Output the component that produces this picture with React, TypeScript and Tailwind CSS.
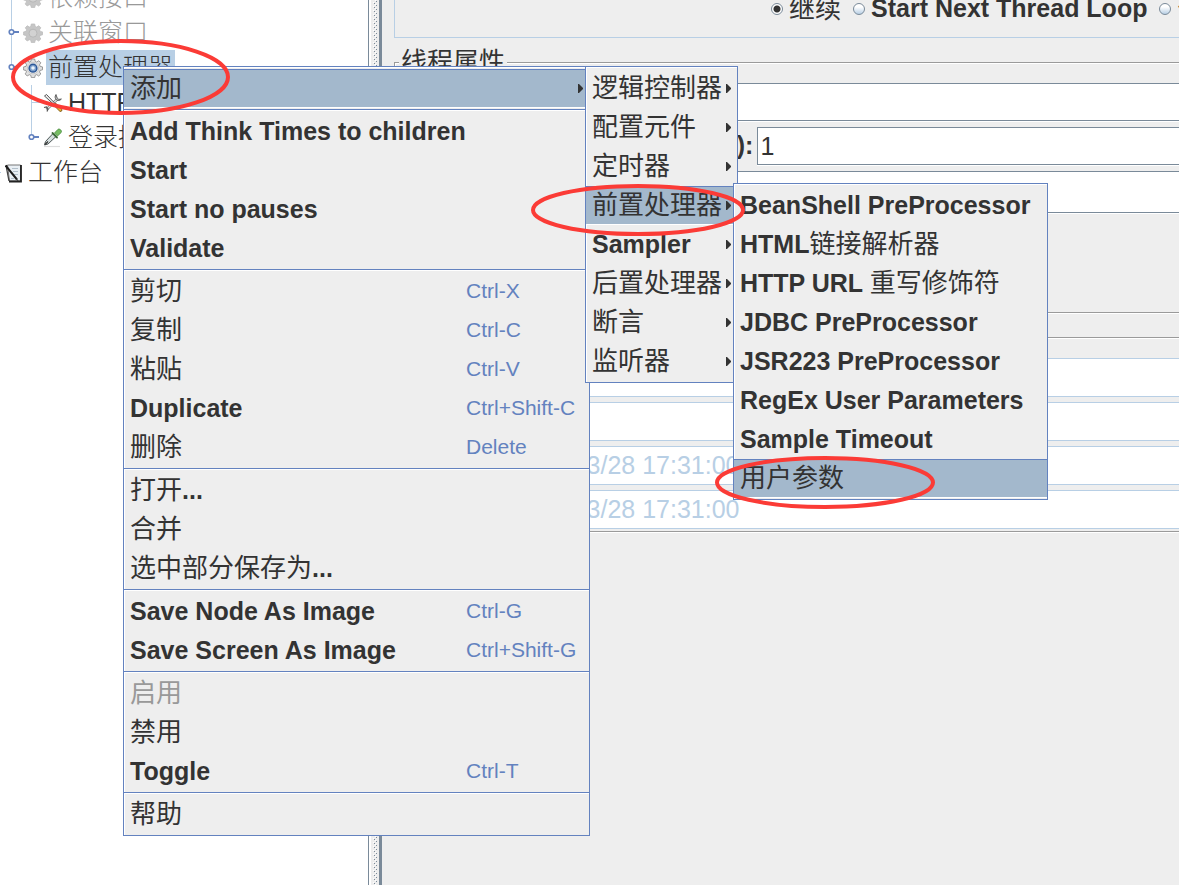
import { Fragment, type ReactNode } from 'react';

interface MenuEntry {
  label: string;
  accel?: string;
  submenu?: boolean;
  active?: boolean;
  disabled?: boolean;
}

const CONTEXT_MENU: MenuEntry[][] = [
  [{ label: '添加', submenu: true, active: true }],
  [
    { label: 'Add Think Times to children' },
    { label: 'Start' },
    { label: 'Start no pauses' },
    { label: 'Validate' },
  ],
  [
    { label: '剪切', accel: 'Ctrl-X' },
    { label: '复制', accel: 'Ctrl-C' },
    { label: '粘贴', accel: 'Ctrl-V' },
    { label: 'Duplicate', accel: 'Ctrl+Shift-C' },
    { label: '删除', accel: 'Delete' },
  ],
  [{ label: '打开...' }, { label: '合并' }, { label: '选中部分保存为...' }],
  [
    { label: 'Save Node As Image', accel: 'Ctrl-G' },
    { label: 'Save Screen As Image', accel: 'Ctrl+Shift-G' },
  ],
  [{ label: '启用', disabled: true }, { label: '禁用' }, { label: 'Toggle', accel: 'Ctrl-T' }],
  [{ label: '帮助' }],
];

const ADD_MENU: MenuEntry[][] = [
  [
    { label: '逻辑控制器', submenu: true },
    { label: '配置元件', submenu: true },
    { label: '定时器', submenu: true },
    { label: '前置处理器', submenu: true, active: true },
    { label: 'Sampler', submenu: true },
    { label: '后置处理器', submenu: true },
    { label: '断言', submenu: true },
    { label: '监听器', submenu: true },
  ],
];

const PREPROCESSOR_MENU: MenuEntry[][] = [
  [
    { label: 'BeanShell PreProcessor' },
    { label: 'HTML链接解析器' },
    { label: 'HTTP URL 重写修饰符' },
    { label: 'JDBC PreProcessor' },
    { label: 'JSR223 PreProcessor' },
    { label: 'RegEx User Parameters' },
    { label: 'Sample Timeout' },
    { label: '用户参数', active: true },
  ],
];

const SCHEDULER = [
  { id: 'duration', label: '持续时间', value: '' },
  { id: 'delay', label: '启动延迟', value: '' },
  { id: 'start', label: '启动时间', value: '2018/3/28 17:31:00' },
  { id: 'end', label: '结束时间', value: '2018/3/28 17:31:00' },
];

// Latin runs are bold, Chinese runs are regular and one pixel larger
function Mixed({ text }: { text: string }) {
  return (
    <>
      {text.split(/([\u4e00-\u9fff]+)/).filter(Boolean).map((part, i) =>
        /[\u4e00-\u9fff]/.test(part) ? (
          <span key={i} className="text-[26px] font-normal">{part}</span>
        ) : (
          <span key={i} className="font-bold">{part}</span>
        ),
      )}
    </>
  );
}

function Menu({ groups, className, label }: { groups: MenuEntry[][]; className: string; label: string }) {
  return (
    <div
      role="menu"
      aria-label={label}
      className={`absolute border border-[#6382bf] bg-[#eeeeee] pt-0.5 pb-px shadow-[inset_1px_1px_0_#fff] ${className}`}
    >
      {groups.map((group, g) => (
        <Fragment key={g}>
          {g > 0 && <div role="separator" className="my-px h-0.5 border-t border-b border-t-[#6382bf] border-b-white" />}
          {group.map(item => (
            <button
              key={item.label}
              type="button"
              role="menuitem"
              disabled={item.disabled}
              className={`flex h-[39px] w-full items-center border-y px-1.5 text-left leading-[37px] whitespace-nowrap ${
                item.active ? 'border-t-[#6382bf] border-b-white bg-[#a3b8cc]' : 'border-transparent'
              } ${item.disabled ? 'text-[#999999]' : 'text-[#333333]'}`}
            >
              <span className="flex-1 whitespace-pre"><Mixed text={item.label} /></span>
              {item.accel && <span className="w-[117px] pb-0.5 text-[21px] leading-[35px] text-[#6382bf]">{item.accel}</span>}
              {item.submenu && (
                <svg width="5" height="9" viewBox="0 0 5 9" className="shrink-0" aria-hidden="true">
                  <path d="M0 0h1l4 4v1L1 9H0z" fill="#333" />
                </svg>
              )}
            </button>
          ))}
        </Fragment>
      ))}
    </div>
  );
}

function GearIcon({ muted }: { muted?: boolean }) {
  const fill = muted ? '#c6c6c6' : '#e0e0e0';
  const edge = muted ? '#bcbcbc' : '#858585';
  return (
    <svg width="20" height="20" viewBox="0 0 20 20" className="shrink-0" aria-hidden="true">
      <path
        d="M8.3 1h3.4l.5 2.4 1.5.7 2.1-1.4 2 2.1-1.3 2 .7 1.6 2.3.5v2.9l-2.4.6-.6 1.5 1.3 2.1-2.1 2-2-1.3-1.5.6-.5 2.3H8.3l-.5-2.3-1.5-.6-2.1 1.3-2-2.1 1.3-2-.6-1.5L.6 12V8.900L3 8.400l.6-1.600-1.300-2 2-2.100 2 1.400 1.500-.7z"
        fill={fill}
        stroke={edge}
        strokeWidth=".8"
      />
      {muted ? (
        <circle cx="10" cy="10.2" r="4" fill="#d2d2d2" stroke="#b8b8b8" />
      ) : (
        <>
          <circle cx="10" cy="10.2" r="5.600" fill="#f6f6f6" stroke="#b0b0b0" strokeWidth=".6" />
          <circle cx="10" cy="10.2" r="3.900" fill="#7da0cc" stroke="#2c5796" strokeWidth="1.500" />
          <circle cx="10" cy="10" r="1.800" fill="#eef5fc" />
        </>
      )}
    </svg>
  );
}

function ToolsIcon() {
  return (
    <svg width="20" height="20" viewBox="0 0 20 20" className="shrink-0" aria-hidden="true">
      <path d="M3.500 16.500 14.500 6" stroke="#777" strokeWidth="2.600" />
      <path d="M4 16 14 6.500" stroke="#e4e4e4" strokeWidth="1.200" />
      <path d="M13 1.500c-1.500 2-1 4 .4 5.200s3.600 1 5-.7l-2.600.4-1.700-1.500z" fill="#bbb" stroke="#444" strokeWidth=".8" />
      <path d="m1.500 3 2-1.500 9.500 10-1 1z" fill="#eee" stroke="#444" strokeWidth=".9" />
      <path d="m12.500 12 5 5" stroke="#8a6a2a" strokeWidth="3.600" strokeLinecap="round" />
      <path d="m13 12.500 4.300 4.300" stroke="#f0b32c" strokeWidth="2.200" strokeLinecap="round" />
      <path d="m1 14.500 2.500-.5 1.500 2-1 2.500" stroke="#555" strokeWidth="1.200" fill="none" />
    </svg>
  );
}

function DropperIcon() {
  return (
    <svg width="20" height="20" viewBox="0 0 20 20" className="shrink-0" aria-hidden="true">
      <path d="M1 18.500h16" stroke="#ddd" strokeWidth="1.200" />
      <path d="m1.500 17 1-3.500 7.500-8 3 3-8 7.500z" fill="#d5dedf" stroke="#4e5858" strokeWidth="1" />
      <path d="m2 16.500 3-3" stroke="#333" strokeWidth="1.300" />
      <path d="m9.500 5 4.500 4.500" stroke="#3d6a38" strokeWidth="1.800" strokeLinecap="round" />
      <path d="m11.500 5 3.500-3.700c1.500-1 4.300 1.200 3.200 3.200L14.500 8z" fill="#76bd62" stroke="#4a8a40" strokeWidth=".8" />
    </svg>
  );
}

function WorkbenchIcon() {
  return (
    <svg width="18" height="20" viewBox="0 0 18 20" className="shrink-0" aria-hidden="true">
      <path d="M2.500 2h13v16h-11z" fill="#e9eff4" stroke="#777" strokeWidth="1" />
      <path d="M7 5.500h6M8 8.500h5M9 11.500h4M6 15.500h3" stroke="#b2bfca" />
      <path d="M16 2v16.500H4" stroke="#222" strokeWidth="1.800" fill="none" />
      <path d="M1.500 2v3l2.500 13" stroke="#444" strokeWidth="1.300" fill="none" />
      <path d="m.5 2.500 11.500 14" stroke="#1c1c1c" strokeWidth="2" />
      <path d="m11.500 15.500 1.500 2.500" stroke="#333" strokeWidth="1" />
    </svg>
  );
}

function TreeRow({ guide, icon, label, muted, selected }: {
  guide: ReactNode;
  icon: ReactNode;
  label: string;
  muted?: boolean;
  selected?: boolean;
}) {
  return (
    <li className={`flex h-[35px] items-center whitespace-nowrap ${muted ? 'text-[#999999]' : 'text-[#333333]'}`}>
      {guide}
      {icon}
      <span className={`ml-[3px] h-[35px] px-0.5 leading-[35px] ${selected ? 'bg-[#b8cfe5]' : ''}`}>{label}</span>
    </li>
  );
}

// Connector lines at the left of a tree row, with an optional expand handle
function Guide({ width, x, to = 35, handle, dash }: { width: number; x: number; to?: number; handle?: boolean; dash?: boolean }) {
  return (
    <svg width={width} height="35" viewBox={`0 0 ${width} 35`} className="shrink-0" aria-hidden="true">
      <path d={`M${x}.5 0V${to}`} stroke="#b8cfe5" />
      {dash && <path d={`M${x} 17.5h12`} stroke="#b8cfe5" />}
      {handle && (
        <>
          <path d={`M${x + 3} 17h5`} stroke="#6382bf" strokeWidth="2" />
          <circle cx={x + 0.5} cy="17" r="2.300" fill="#fff" stroke="#6382bf" strokeWidth="1.600" />
        </>
      )}
    </svg>
  );
}

function Ellipse({ width, height, className }: { width: number; height: number; className: string }) {
  return (
    <svg
      width={width}
      height={height}
      viewBox={`0 0 ${width} ${height}`}
      className={`pointer-events-none absolute ${className}`}
      aria-hidden="true"
    >
      <ellipse cx={width / 2} cy={height / 2} rx={width / 2 - 2} ry={height / 2 - 2} fill="none" stroke="#fb3b36" strokeWidth="4" />
    </svg>
  );
}

const RADIO =
  'size-3 shrink-0 appearance-none rounded-full border border-[#7a8a99] bg-[linear-gradient(#ffffff_30%,#b8cfe5)] checked:bg-[radial-gradient(circle,#333333_3px,#ffffff_4px)]';
const FIELD = 'min-w-0 flex-1 border border-r-0 border-[#7a8a99] bg-white px-0.5 text-[#333333] shadow-[0_1px_0_#fff] outline-none';
const GROUP =
  'border border-r-0 border-[#9a9a9a] pt-1.5 shadow-[inset_1px_1px_0_#fff,0_1px_0_#fff]';

function Legend({ children }: { children: string }) {
  return <legend className="ml-1 h-[30px] bg-[#eeeeee] px-0.5 text-[26px] leading-[30px]">{children}</legend>;
}

export default function App() {
  return (
    <div className="relative flex min-h-screen overflow-hidden bg-[#eeeeee] font-['Liberation_Sans','Noto_Sans_CJK_SC',sans-serif] text-[25px] text-[#333333]">
      <nav aria-label="测试计划" className="w-[369px] shrink-0 overflow-hidden border-r border-[#7a8a99] bg-white">
        <ul className="-mt-5 font-light">
          <TreeRow muted guide={<Guide width={23} x={11} />} icon={<GearIcon muted />} label="依赖接口" />
          <TreeRow muted guide={<Guide width={23} x={11} handle />} icon={<GearIcon muted />} label="关联窗口" />
          <TreeRow selected guide={<Guide width={23} x={11} to={17} handle />} icon={<GearIcon />} label="前置处理器" />
          <TreeRow guide={<Guide width={43} x={31} dash />} icon={<ToolsIcon />} label="HTTP请求" />
          <TreeRow guide={<Guide width={43} x={31} to={17} handle />} icon={<DropperIcon />} label="登录接口" />
          <TreeRow
            guide={<svg width="5" height="35" className="shrink-0" aria-hidden="true"><path d="M0 17.500h1" stroke="#b8cfe5" /></svg>}
            icon={<WorkbenchIcon />}
            label="工作台"
          />
        </ul>
      </nav>

      <div role="separator" className="flex w-[13px] shrink-0 border-r-3 border-l-2 border-r-[#7a8a99] border-l-white">
        <svg width="8" height="100%" aria-hidden="true">
          <defs>
            <pattern id="bumps" width="8" height="4" patternUnits="userSpaceOnUse">
              <path d="M2 2h1v1H2zM4 0h1v1H4z" fill="#fff" />
              <path d="M3 3h1v1H3zM5 1h1v1H5z" fill="#7a8a99" />
            </pattern>
          </defs>
          <rect width="8" height="100%" fill="url(#bumps)" />
        </svg>
      </div>

      <main className="min-w-0 flex-1 overflow-hidden pl-3">
        <div className="flex h-[38px] items-start border-b border-l border-[#b8cfe5] pl-[376px]">
          <div className="-mt-1 flex h-[26px] items-center whitespace-nowrap">
            <label className="flex items-center gap-1.5">
              <input type="radio" name="onError" defaultChecked className={RADIO} />
              <Mixed text="继续" />
            </label>
            <label className="ml-3 flex items-center gap-1.5">
              <input type="radio" name="onError" className={RADIO} />
              <Mixed text="Start Next Thread Loop" />
            </label>
            <label className="ml-3 flex items-center gap-1.5">
              <input type="radio" name="onError" className={RADIO} />
              <Mixed text="停止线程" />
            </label>
          </div>
        </div>

        <fieldset className={`mt-[9px] pb-[99px] ${GROUP}`}>
          <Legend>线程属性</Legend>
          <div className="flex flex-col gap-1.5">
            <div className="flex h-[38px] items-center">
              <label htmlFor="threads" className="mr-1"><Mixed text="线程数" /></label>
              <input id="threads" className={`h-full ${FIELD}`} />
            </div>
            <div className="flex h-[38px] items-center">
              <label htmlFor="ramp" className="mr-1 font-bold whitespace-nowrap">Ramp-Up Period (in seconds):</label>
              <input id="ramp" defaultValue="1" className={`h-full ${FIELD}`} />
            </div>
            <div className="flex h-[42px] items-center">
              <label htmlFor="loops" className="mr-1"><Mixed text="循环次数" /></label>
              <input id="loops" className={`h-full ${FIELD}`} />
            </div>
          </div>
        </fieldset>

        <fieldset className={`mt-[9px] pb-0.5 ${GROUP}`}>
          <Legend>调度器配置</Legend>
          <div className="flex flex-col gap-[5px]">
            {SCHEDULER.map(row => (
              <div key={row.id} className="flex h-[39px] items-center">
                <label htmlFor={row.id} className="w-[126px]"><Mixed text={row.label} /></label>
                <input
                  id={row.id}
                  disabled
                  defaultValue={row.value}
                  className="h-full min-w-0 flex-1 border border-r-0 border-[#b8cfe5] bg-white px-0.5 text-[#b8cfe5]"
                />
              </div>
            ))}
          </div>
        </fieldset>
      </main>

      <Menu label="节点" groups={CONTEXT_MENU} className="top-[66px] left-[123px] w-[467px]" />
      <Menu label="添加" groups={ADD_MENU} className="top-[66px] left-[585px] w-[153px]" />
      <Menu label="前置处理器" groups={PREPROCESSOR_MENU} className="top-[183px] left-[733px] w-[315px]" />

      <Ellipse width={219} height={76} className="top-[39px] left-[11px]" />
      <Ellipse width={214} height={52} className="top-[184px] left-[531px]" />
      <Ellipse width={220} height={53} className="top-[456px] left-[715px]" />
    </div>
  );
}
